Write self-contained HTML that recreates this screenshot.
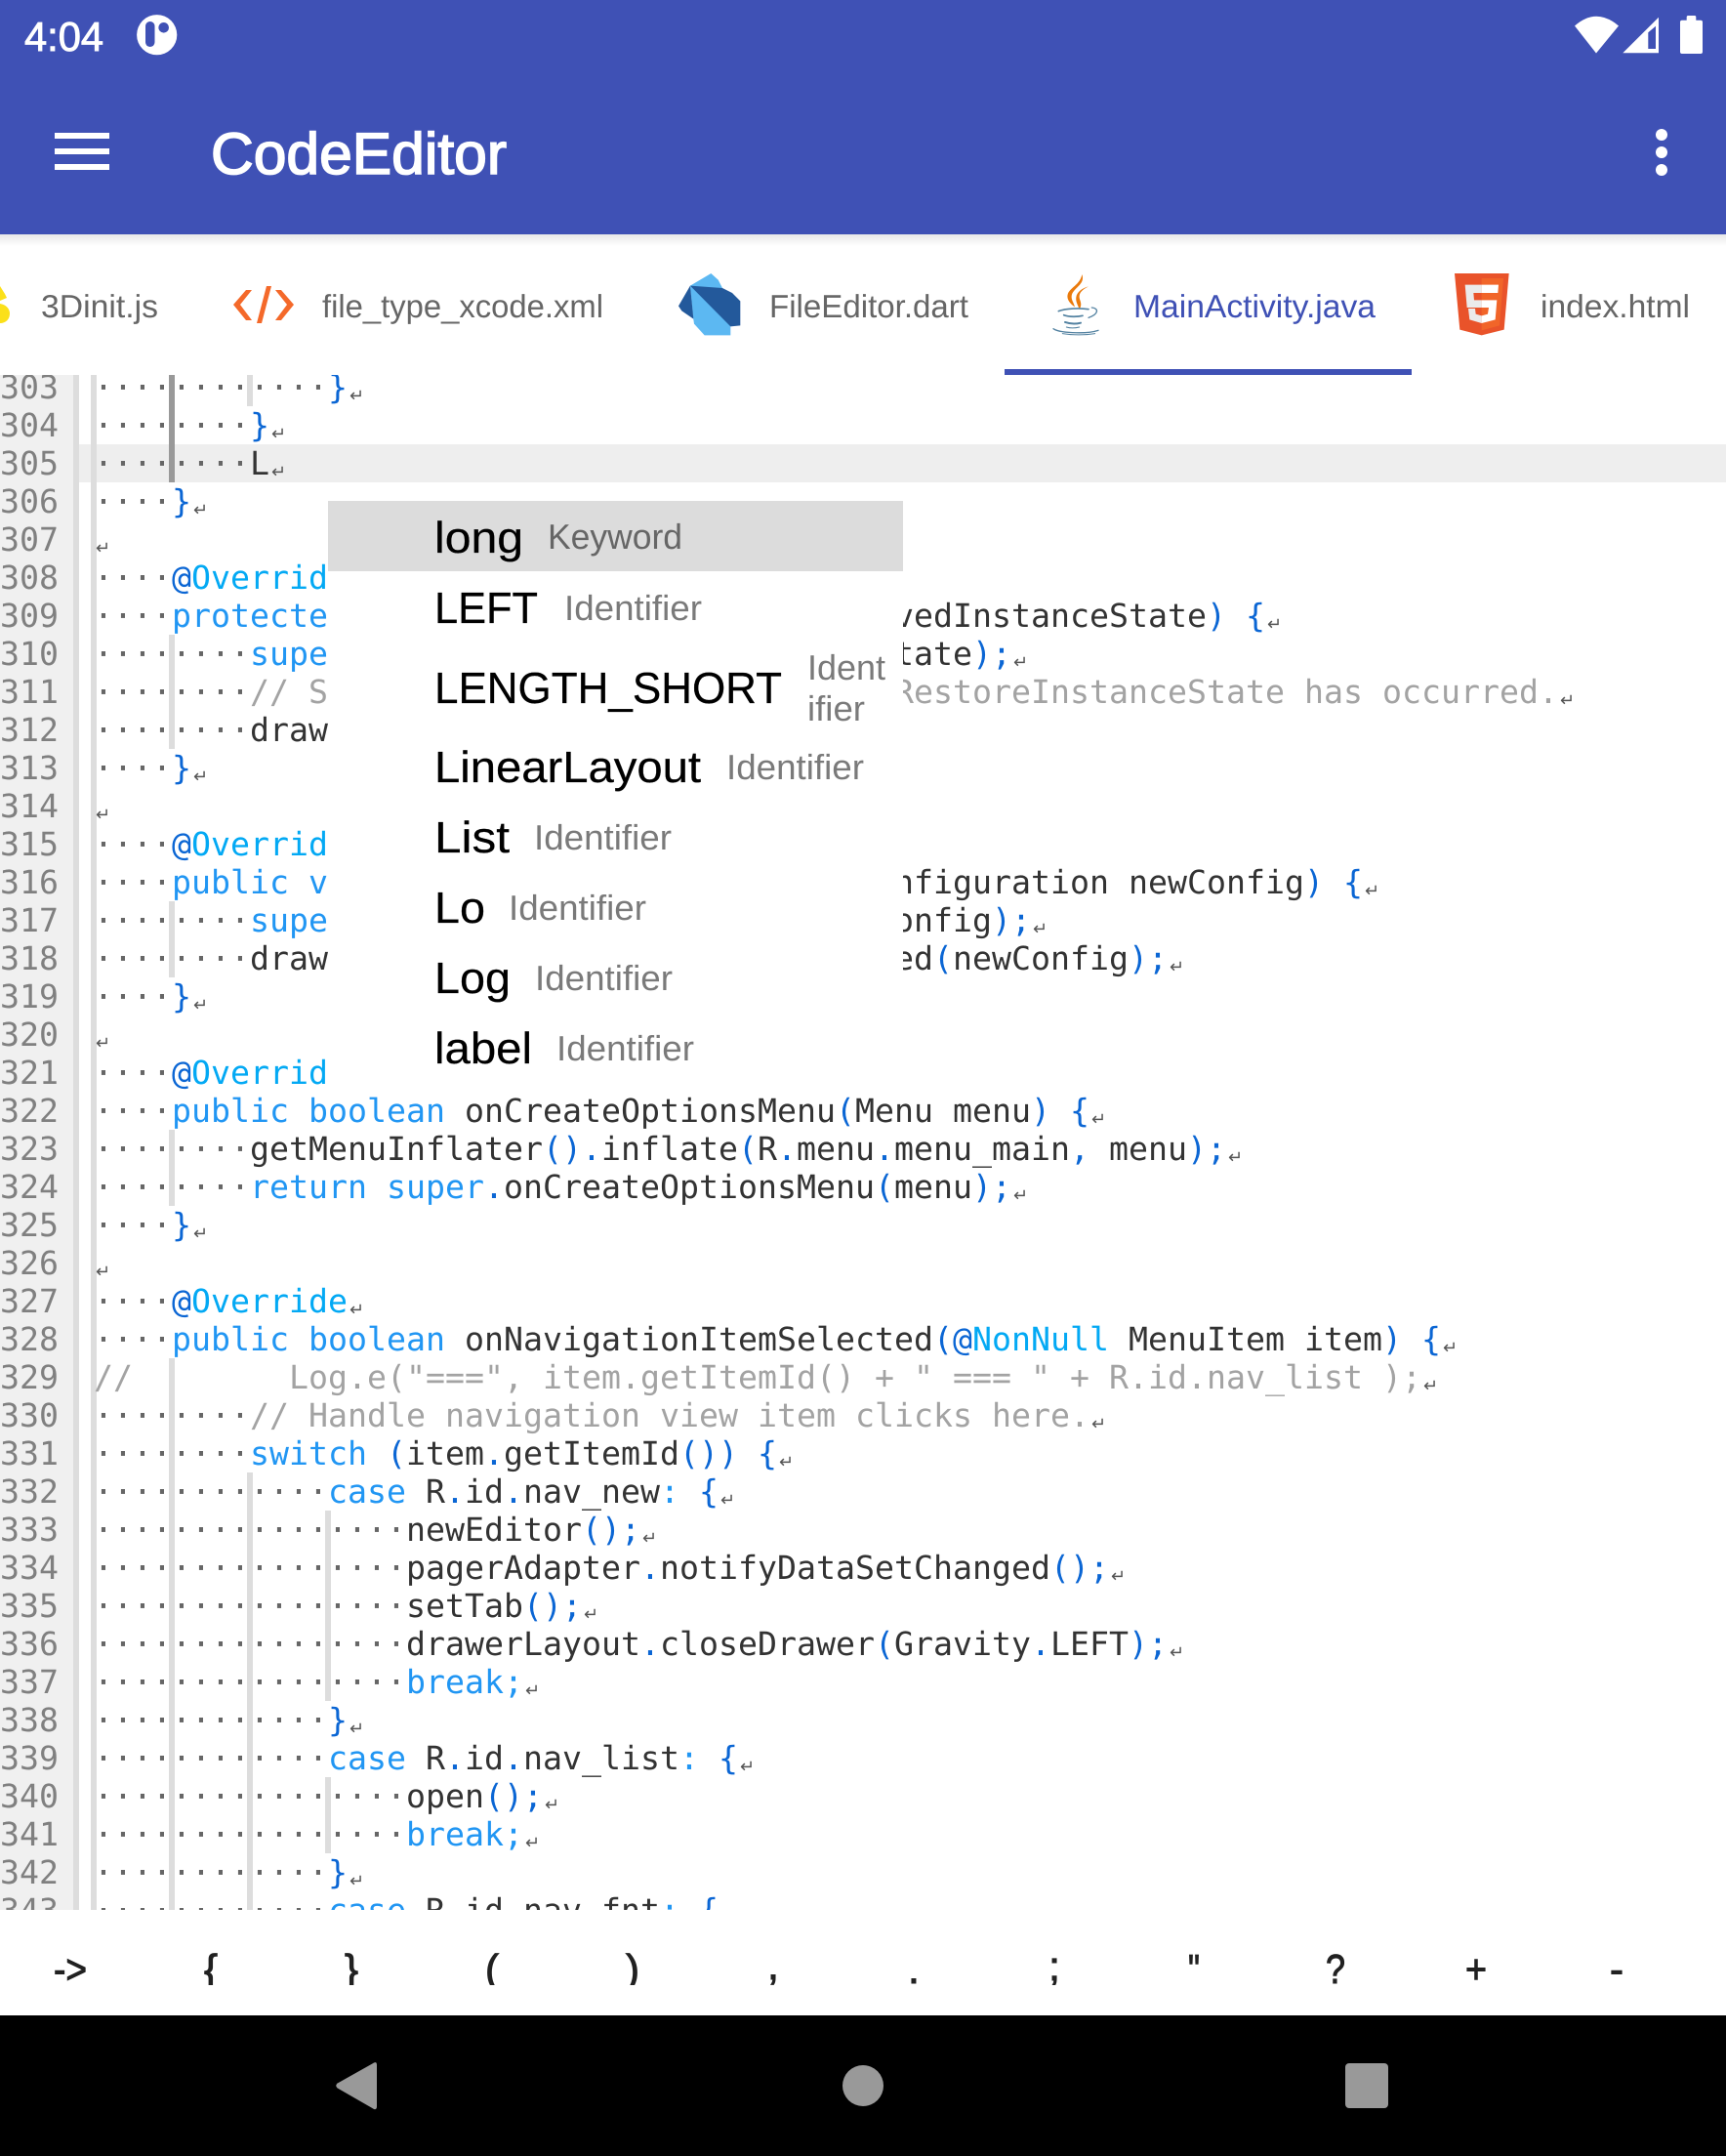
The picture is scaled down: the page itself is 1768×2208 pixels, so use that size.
<!DOCTYPE html>
<html lang="en">
<head>
<meta charset="utf-8">
<title>CodeEditor</title>
<style>
html,body{margin:0;padding:0;background:#fff}
body{width:1768px;height:2208px;overflow:hidden}
svg{display:block}
text{text-rendering:geometricPrecision}
.s{font-family:"Liberation Sans",Arial,sans-serif}
.m{font-family:"DejaVu Sans Mono","Liberation Mono",monospace;font-size:33.22px;white-space:pre;fill:#333}
.ln{fill:#808080}
.k{fill:#2196f3}
.p{fill:#0b66d4}
.a{fill:#03a9f4}
.c{fill:#a3a3a3}
.d{fill:#666}
.n{fill:#555;font-family:"DejaVu Sans",sans-serif;font-size:18px}
.t{font-size:33px;fill:#666}
.i{font-size:45px;fill:#000;stroke:#000;stroke-width:.25px}
.h{font-size:36px;fill:#7a7a7a}
.b{font-size:42px;fill:#212121;stroke:#212121;stroke-width:1px;text-anchor:middle}
</style>
</head>
<body>
<svg xmlns="http://www.w3.org/2000/svg" width="1768" height="2208" viewBox="0 0 1768 2208">
<defs>
<linearGradient id="sh" x1="0" y1="0" x2="0" y2="1"><stop offset="0" stop-color="#e8e8e8"/><stop offset="1" stop-color="#fff"/></linearGradient>
<clipPath id="code"><rect x="0" y="384" width="1768" height="1572"/></clipPath>
<clipPath id="keys"><rect x="0" y="1956" width="1768" height="77"/></clipPath>
</defs>
<rect width="1768" height="2208" fill="#fff"/>

<!-- app bar -->
<rect width="1768" height="240" fill="#3f51b5"/>
<rect y="240" width="1768" height="12" fill="url(#sh)"/>
<text class="s" x="25" y="52" font-size="42" fill="#fff" stroke="#fff" stroke-width=".9" textLength="81" lengthAdjust="spacingAndGlyphs">4:04</text>
<circle cx="160.7" cy="35.7" r="20.6" fill="#fff"/>
<rect x="149" y="22" width="9.5" height="26" rx="4.7" fill="#3f51b5"/>
<circle cx="167.7" cy="28.3" r="5.3" fill="#3f51b5"/>
<path d="M1635 54.5L1613 26.5Q1635 6.9 1658 26.5Z" fill="#fff"/>
<path d="M1662.3 54.3L1699 17.7V54.3Z" fill="#fff"/>
<path d="M1688.3 33.3L1696 26.7V50H1688.3Z" fill="#3f51b5"/>
<path d="M1727.7 20.7V17.5a1.5 1.5 0 0 1 1.5-1.5h6.6a1.5 1.5 0 0 1 1.5 1.5v3.2h4.7a2 2 0 0 1 2 2V53a2 2 0 0 1-2 2H1723a2 2 0 0 1-2-2V22.700a2 2 0 0 1 2-2Z" fill="#fff"/>
<rect x="56" y="136" width="56" height="6" fill="#fff"/>
<rect x="56" y="152" width="56" height="6" fill="#fff"/>
<rect x="56" y="168" width="56" height="6" fill="#fff"/>
<text class="s" x="216" y="178" font-size="60" fill="#fff" stroke="#fff" stroke-width="1.6" textLength="303" lengthAdjust="spacingAndGlyphs">CodeEditor</text>
<circle cx="1702" cy="138" r="6" fill="#fff"/>
<circle cx="1702" cy="156" r="6" fill="#fff"/>
<circle cx="1702" cy="174" r="6" fill="#fff"/>

<!-- tabs -->
<path d="M0 293L5 301L7 305L0 308ZM0 311C6 312 10 316 10 321C10 327 6 331 0 331Z" fill="#fbe01a"/>
<text class="s t" x="42" y="325" textLength="120" lengthAdjust="spacingAndGlyphs">3Dinit.js</text>
<path d="M258 297L252 297L239 312L252 328L258 328L246 312ZM282 297L288 297L301 312L288 328L282 328L294 312ZM273 293L278 293L268 331L263 331Z" fill="#f4692a"/>
<text class="s t" x="330" y="325" textLength="288" lengthAdjust="spacingAndGlyphs">file_type_xcode.xml</text>
<g transform="translate(685 270) scale(.3333)">
<path d="M66 68L130 30L152 50L165 75L190 193V220H110L78 185L75 165Z" fill="#5cb8f2"/>
<path d="M66 68L165 75L195 90L220 115V190L190 193Z" fill="#23599b"/>
<path d="M66 68L30 130L40 145L76 170Z" fill="#23599b"/>
</g>
<text class="s t" x="788" y="325" textLength="204" lengthAdjust="spacingAndGlyphs">FileEditor.dart</text>
<g transform="translate(1065 270) scale(.3333)">
<path d="M130 33C142 65 100 75 98 100C97 112 105 120 108 133C95 125 82 110 86 95C90 75 125 65 130 33Z" fill="#ea7a0c"/>
<path d="M150 70C130 80 120 90 122 105C124 115 132 125 122 140C118 128 110 118 112 103C114 88 130 75 150 70Z" fill="#ea7a0c"/>
<g fill="none" stroke="#5382a1" stroke-linecap="round">
<path d="M58 146C80 137 125 136 150 140" stroke-width="5"/>
<path d="M160 135C182 137 182 155 150 166" stroke-width="4"/>
<path d="M74 158C90 164 115 164 132 160" stroke-width="5"/>
<path d="M78 180C95 186 110 186 126 182" stroke-width="6"/>
<path d="M42 200C55 212 140 218 180 205" stroke-width="4"/>
<path d="M70 215C100 220 140 220 170 215" stroke-width="3"/>
<path d="M82 195C95 199 110 198 122 195" stroke-width="3"/>
</g>
</g>
<text class="s t" x="1161" y="325" style="fill:#3f51b5" textLength="248" lengthAdjust="spacingAndGlyphs">MainActivity.java</text>
<rect x="1029" y="378" width="417" height="6" fill="#3f51b5"/>
<g transform="translate(1480 270) scale(.3333)">
<path d="M30 30H197L182 203L113 220L46 203Z" fill="#e9532a"/>
<path d="M113 45H180L168 190L113 205Z" fill="#f16529"/>
<path d="M113 65H62L68 135H113V112H90L88 90H113ZM113 160L95 155L93 138H72L76 172L113 183Z" fill="#ebebeb"/>
<path d="M113 65H165L163 90H113ZM113 112H160L155 172L113 183V160L132 155L135 135H113Z" fill="#fff"/>
</g>
<text class="s t" x="1578" y="325" textLength="153" lengthAdjust="spacingAndGlyphs">index.html</text>

<!-- editor -->
<g clip-path="url(#code)">
<rect x="81" y="455" width="1687" height="39" fill="#eee"/>
<rect x="0" y="377" width="75" height="1579" fill="#f0f0f0"/>
<rect x="75" y="377" width="6" height="1579" fill="#ddd"/>
<rect x="93" y="377" width="6" height="1579" fill="#ddd"/>
<g fill="#ddd">
<rect x="253" y="377" width="6" height="39"/>
<rect x="173" y="650" width="6" height="117"/>
<rect x="173" y="923" width="6" height="78"/>
<rect x="173" y="1157" width="6" height="78"/>
<rect x="173" y="1391" width="6" height="565"/>
<rect x="253" y="1508" width="6" height="448"/>
<rect x="333" y="1547" width="6" height="195"/>
<rect x="333" y="1820" width="6" height="78"/>
</g>
<rect x="173" y="377" width="6" height="117" fill="#999"/>

<g transform="translate(0 1)">
<text class="m ln" x="0" y="407">303</text><text class="m ln" x="0" y="446">304</text><text class="m ln" x="0" y="485">305</text><text class="m ln" x="0" y="524">306</text><text class="m ln" x="0" y="563">307</text><text class="m ln" x="0" y="602">308</text><text class="m ln" x="0" y="641">309</text><text class="m ln" x="0" y="680">310</text><text class="m ln" x="0" y="719">311</text><text class="m ln" x="0" y="758">312</text><text class="m ln" x="0" y="797">313</text><text class="m ln" x="0" y="836">314</text><text class="m ln" x="0" y="875">315</text><text class="m ln" x="0" y="914">316</text><text class="m ln" x="0" y="953">317</text><text class="m ln" x="0" y="992">318</text><text class="m ln" x="0" y="1031">319</text><text class="m ln" x="0" y="1070">320</text><text class="m ln" x="0" y="1109">321</text><text class="m ln" x="0" y="1148">322</text><text class="m ln" x="0" y="1187">323</text><text class="m ln" x="0" y="1226">324</text><text class="m ln" x="0" y="1265">325</text><text class="m ln" x="0" y="1304">326</text><text class="m ln" x="0" y="1343">327</text><text class="m ln" x="0" y="1382">328</text><text class="m ln" x="0" y="1421">329</text><text class="m ln" x="0" y="1460">330</text><text class="m ln" x="0" y="1499">331</text><text class="m ln" x="0" y="1538">332</text><text class="m ln" x="0" y="1577">333</text><text class="m ln" x="0" y="1616">334</text><text class="m ln" x="0" y="1655">335</text><text class="m ln" x="0" y="1694">336</text><text class="m ln" x="0" y="1733">337</text><text class="m ln" x="0" y="1772">338</text><text class="m ln" x="0" y="1811">339</text><text class="m ln" x="0" y="1850">340</text><text class="m ln" x="0" y="1889">341</text><text class="m ln" x="0" y="1928">342</text><text class="m ln" x="0" y="1967">343</text>

<text class="m" x="96" y="407"><tspan class="d">············</tspan><tspan class="p">}</tspan><tspan class="n" dx="2" dy="3">↵</tspan></text>
<text class="m" x="96" y="446"><tspan class="d">········</tspan><tspan class="p">}</tspan><tspan class="n" dx="2" dy="3">↵</tspan></text>
<text class="m" x="96" y="485"><tspan class="d">········</tspan>L<tspan class="n" dx="2" dy="3">↵</tspan></text>
<text class="m" x="96" y="524"><tspan class="d">····</tspan><tspan class="p">}</tspan><tspan class="n" dx="2" dy="3">↵</tspan></text>
<text class="m" x="96" y="563"><tspan class="n" dx="2" dy="3">↵</tspan></text>
<text class="m" x="96" y="602"><tspan class="d">····</tspan><tspan class="p">@</tspan><tspan class="a">Override</tspan><tspan class="n" dx="2" dy="3">↵</tspan></text>
<text class="m" x="96" y="641"><tspan class="d">····</tspan><tspan class="k">protected void</tspan> onPostCreate<tspan class="p">(</tspan>Bundle savedInstanceState<tspan class="p">) {</tspan><tspan class="n" dx="2" dy="3">↵</tspan></text>
<text class="m" x="96" y="680"><tspan class="d">········</tspan><tspan class="k">super</tspan><tspan class="p">.</tspan>onPostCreate<tspan class="p">(</tspan>savedInstanceState<tspan class="p">);</tspan><tspan class="n" dx="2" dy="3">↵</tspan></text>
<text class="m" x="96" y="719"><tspan class="d">········</tspan><tspan class="c">// Sync the toggle state after onRestoreInstanceState has occurred.</tspan><tspan class="n" dx="2" dy="3">↵</tspan></text>
<text class="m" x="96" y="758"><tspan class="d">········</tspan>drawerToggle<tspan class="p">.</tspan>syncState<tspan class="p">();</tspan><tspan class="n" dx="2" dy="3">↵</tspan></text>
<text class="m" x="96" y="797"><tspan class="d">····</tspan><tspan class="p">}</tspan><tspan class="n" dx="2" dy="3">↵</tspan></text>
<text class="m" x="96" y="836"><tspan class="n" dx="2" dy="3">↵</tspan></text>
<text class="m" x="96" y="875"><tspan class="d">····</tspan><tspan class="p">@</tspan><tspan class="a">Override</tspan><tspan class="n" dx="2" dy="3">↵</tspan></text>
<text class="m" x="96" y="914"><tspan class="d">····</tspan><tspan class="k">public void</tspan> onConfigurationChanged<tspan class="p">(</tspan>Configuration newConfig<tspan class="p">) {</tspan><tspan class="n" dx="2" dy="3">↵</tspan></text>
<text class="m" x="96" y="953"><tspan class="d">········</tspan><tspan class="k">super</tspan><tspan class="p">.</tspan>onConfigurationChanged<tspan class="p">(</tspan>newConfig<tspan class="p">);</tspan><tspan class="n" dx="2" dy="3">↵</tspan></text>
<text class="m" x="96" y="992"><tspan class="d">········</tspan>drawerToggle<tspan class="p">.</tspan>onConfigurationChanged<tspan class="p">(</tspan>newConfig<tspan class="p">);</tspan><tspan class="n" dx="2" dy="3">↵</tspan></text>
<text class="m" x="96" y="1031"><tspan class="d">····</tspan><tspan class="p">}</tspan><tspan class="n" dx="2" dy="3">↵</tspan></text>
<text class="m" x="96" y="1070"><tspan class="n" dx="2" dy="3">↵</tspan></text>
<text class="m" x="96" y="1109"><tspan class="d">····</tspan><tspan class="p">@</tspan><tspan class="a">Override</tspan><tspan class="n" dx="2" dy="3">↵</tspan></text>
<text class="m" x="96" y="1148"><tspan class="d">····</tspan><tspan class="k">public boolean</tspan> onCreateOptionsMenu<tspan class="p">(</tspan>Menu menu<tspan class="p">) {</tspan><tspan class="n" dx="2" dy="3">↵</tspan></text>
<text class="m" x="96" y="1187"><tspan class="d">········</tspan>getMenuInflater<tspan class="p">().</tspan>inflate<tspan class="p">(</tspan>R<tspan class="p">.</tspan>menu<tspan class="p">.</tspan>menu_main<tspan class="p">,</tspan> menu<tspan class="p">);</tspan><tspan class="n" dx="2" dy="3">↵</tspan></text>
<text class="m" x="96" y="1226"><tspan class="d">········</tspan><tspan class="k">return super</tspan><tspan class="p">.</tspan>onCreateOptionsMenu<tspan class="p">(</tspan>menu<tspan class="p">);</tspan><tspan class="n" dx="2" dy="3">↵</tspan></text>
<text class="m" x="96" y="1265"><tspan class="d">····</tspan><tspan class="p">}</tspan><tspan class="n" dx="2" dy="3">↵</tspan></text>
<text class="m" x="96" y="1304"><tspan class="n" dx="2" dy="3">↵</tspan></text>
<text class="m" x="96" y="1343"><tspan class="d">····</tspan><tspan class="p">@</tspan><tspan class="a">Override</tspan><tspan class="n" dx="2" dy="3">↵</tspan></text>
<text class="m" x="96" y="1382"><tspan class="d">····</tspan><tspan class="k">public boolean</tspan> onNavigationItemSelected<tspan class="p">(@</tspan><tspan class="a">NonNull</tspan> MenuItem item<tspan class="p">) {</tspan><tspan class="n" dx="2" dy="3">↵</tspan></text>
<text class="m" x="96" y="1421"><tspan class="c">//        Log.e("===", item.getItemId() + " === " + R.id.nav_list );</tspan><tspan class="n" dx="2" dy="3">↵</tspan></text>
<text class="m" x="96" y="1460"><tspan class="d">········</tspan><tspan class="c">// Handle navigation view item clicks here.</tspan><tspan class="n" dx="2" dy="3">↵</tspan></text>
<text class="m" x="96" y="1499"><tspan class="d">········</tspan><tspan class="k">switch</tspan> <tspan class="p">(</tspan>item<tspan class="p">.</tspan>getItemId<tspan class="p">()) {</tspan><tspan class="n" dx="2" dy="3">↵</tspan></text>
<text class="m" x="96" y="1538"><tspan class="d">············</tspan><tspan class="k">case</tspan> R<tspan class="p">.</tspan>id<tspan class="p">.</tspan>nav_new<tspan class="k">:</tspan> <tspan class="p">{</tspan><tspan class="n" dx="2" dy="3">↵</tspan></text>
<text class="m" x="96" y="1577"><tspan class="d">················</tspan>newEditor<tspan class="p">();</tspan><tspan class="n" dx="2" dy="3">↵</tspan></text>
<text class="m" x="96" y="1616"><tspan class="d">················</tspan>pagerAdapter<tspan class="p">.</tspan>notifyDataSetChanged<tspan class="p">();</tspan><tspan class="n" dx="2" dy="3">↵</tspan></text>
<text class="m" x="96" y="1655"><tspan class="d">················</tspan>setTab<tspan class="p">();</tspan><tspan class="n" dx="2" dy="3">↵</tspan></text>
<text class="m" x="96" y="1694"><tspan class="d">················</tspan>drawerLayout<tspan class="p">.</tspan>closeDrawer<tspan class="p">(</tspan>Gravity<tspan class="p">.</tspan>LEFT<tspan class="p">);</tspan><tspan class="n" dx="2" dy="3">↵</tspan></text>
<text class="m" x="96" y="1733"><tspan class="d">················</tspan><tspan class="k">break;</tspan><tspan class="n" dx="2" dy="3">↵</tspan></text>
<text class="m" x="96" y="1772"><tspan class="d">············</tspan><tspan class="p">}</tspan><tspan class="n" dx="2" dy="3">↵</tspan></text>
<text class="m" x="96" y="1811"><tspan class="d">············</tspan><tspan class="k">case</tspan> R<tspan class="p">.</tspan>id<tspan class="p">.</tspan>nav_list<tspan class="k">:</tspan> <tspan class="p">{</tspan><tspan class="n" dx="2" dy="3">↵</tspan></text>
<text class="m" x="96" y="1850"><tspan class="d">················</tspan>open<tspan class="p">();</tspan><tspan class="n" dx="2" dy="3">↵</tspan></text>
<text class="m" x="96" y="1889"><tspan class="d">················</tspan><tspan class="k">break;</tspan><tspan class="n" dx="2" dy="3">↵</tspan></text>
<text class="m" x="96" y="1928"><tspan class="d">············</tspan><tspan class="p">}</tspan><tspan class="n" dx="2" dy="3">↵</tspan></text>
<text class="m" x="96" y="1967"><tspan class="d">············</tspan><tspan class="k">case</tspan> R<tspan class="p">.</tspan>id<tspan class="p">.</tspan>nav_fnt<tspan class="k">:</tspan> <tspan class="p">{</tspan><tspan class="n" dx="2" dy="3">↵</tspan></text>
</g>
</g>

<!-- completion popup -->
<rect x="336" y="513" width="589" height="607" fill="#fff"/>
<rect x="336" y="513" width="589" height="72" fill="#dcdcdc"/>
<g class="s">
<text class="i" x="445" y="566" textLength="91" lengthAdjust="spacingAndGlyphs">long</text>
<text class="h" x="561" y="562" style="fill:#666" textLength="138" lengthAdjust="spacingAndGlyphs">Keyword</text>
<text class="i" x="445" y="638" textLength="106" lengthAdjust="spacingAndGlyphs">LEFT</text>
<text class="h" x="578" y="635" textLength="141" lengthAdjust="spacingAndGlyphs">Identifier</text>
<text class="i" x="445" y="720" textLength="356" lengthAdjust="spacingAndGlyphs">LENGTH_SHORT</text>
<text class="h" x="827" y="696" textLength="80" lengthAdjust="spacingAndGlyphs">Ident</text>
<text class="h" x="827" y="738" textLength="59" lengthAdjust="spacingAndGlyphs">ifier</text>
<text class="i" x="445" y="801" textLength="273" lengthAdjust="spacingAndGlyphs">LinearLayout</text>
<text class="h" x="744" y="798" textLength="141" lengthAdjust="spacingAndGlyphs">Identifier</text>
<text class="i" x="445" y="873" textLength="77" lengthAdjust="spacingAndGlyphs">List</text>
<text class="h" x="547" y="870" textLength="141" lengthAdjust="spacingAndGlyphs">Identifier</text>
<text class="i" x="445" y="945" textLength="52" lengthAdjust="spacingAndGlyphs">Lo</text>
<text class="h" x="521" y="942" textLength="141" lengthAdjust="spacingAndGlyphs">Identifier</text>
<text class="i" x="445" y="1017" textLength="78" lengthAdjust="spacingAndGlyphs">Log</text>
<text class="h" x="548" y="1014" textLength="141" lengthAdjust="spacingAndGlyphs">Identifier</text>
<text class="i" x="445" y="1089" textLength="100" lengthAdjust="spacingAndGlyphs">label</text>
<text class="h" x="570" y="1086" textLength="141" lengthAdjust="spacingAndGlyphs">Identifier</text>
</g>

<!-- symbol bar -->
<rect y="1956" width="1768" height="108" fill="#fff"/>
<g class="s" clip-path="url(#keys)">
<text class="b" x="55" y="2031" style="text-anchor:start" textLength="34" lengthAdjust="spacingAndGlyphs">-&gt;</text>
<text class="b" x="216" y="2031">{</text>
<text class="b" x="360" y="2031">}</text>
<text class="b" x="504" y="2031">(</text>
<text class="b" x="648" y="2031">)</text>
<text class="b" x="792" y="2027">,</text>
<text class="b" x="936" y="2031">.</text>
<text class="b" x="1080" y="2028">;</text>
<text class="b" x="1217" y="2031" style="text-anchor:start" textLength="12" lengthAdjust="spacingAndGlyphs">"</text>
<text class="b" x="1358" y="2031" style="text-anchor:start" textLength="20" lengthAdjust="spacingAndGlyphs">?</text>
<text class="b" x="1501" y="2031" style="text-anchor:start" textLength="22" lengthAdjust="spacingAndGlyphs">+</text>
<text class="b" x="1656" y="2031">-</text>
</g>

<!-- nav bar -->
<rect y="2064" width="1768" height="144" fill="#000"/>
<path d="M383 2112.500L345.500 2133.600Q343 2136 345.500 2138.400L383 2160Q386 2161 386 2157V2115Q386 2111 383 2112.500Z" fill="#999"/>
<circle cx="884" cy="2136" r="21" fill="#999"/>
<rect x="1378" y="2113" width="44" height="46" rx="4" fill="#999"/>
</svg>
</body>
</html>
